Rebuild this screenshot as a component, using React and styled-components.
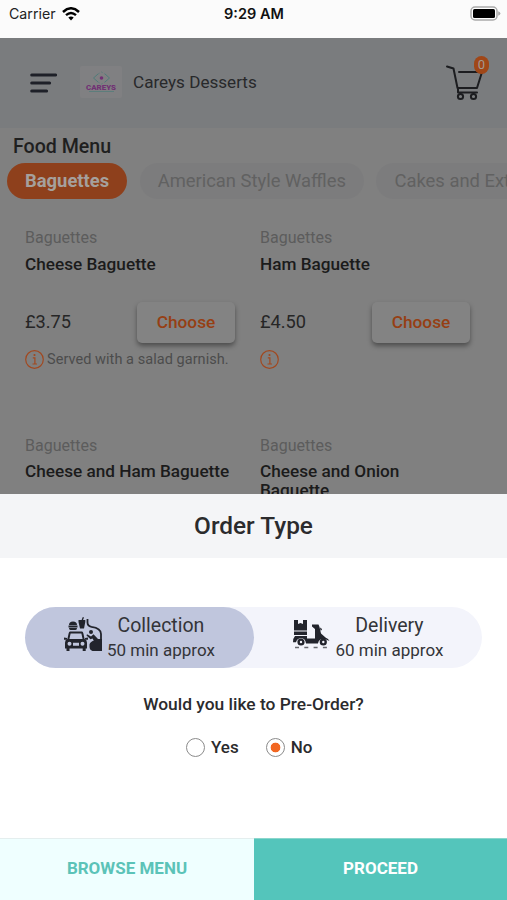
import React, { useState } from "react";
import styled, { createGlobalStyle, css } from "styled-components";

const GlobalStyle = createGlobalStyle`
  * {
    box-sizing: border-box;
  }
  body {
    margin: 0;
    font-family: Roboto, "Liberation Sans", sans-serif;
    color: #2b2b2d;
  }
  button {
    font-family: inherit;
    border: none;
    padding: 0;
    cursor: pointer;
  }
`;

const Screen = styled.div`
  display: flex;
  flex-direction: column;
  width: 507px;
  height: 900px;
  overflow: hidden;
  background: #fff;
`;

const StatusBar = styled.div`
  display: grid;
  grid-template-columns: 1fr auto 1fr;
  align-items: center;
  flex: 0 0 38px;
  padding: 0 6px 11px 9px;
  background: #fbfbfb;
  color: #111;
  font-family: Inter, Roboto, sans-serif;
`;

const Carrier = styled.span`
  display: flex;
  align-items: center;
  gap: 6px;
  font-size: 14.2px;
  color: #222;
`;

const Clock = styled.span`
  margin-right: 2px;
  font-size: 14.5px;
  font-weight: 600;
`;

const BatteryIcon = styled.svg`
  justify-self: end;
`;

const Page = styled.div`
  flex: 0 0 456px;
  overflow: hidden;
  background: #808080;
`;

const Header = styled.header`
  display: flex;
  align-items: center;
  height: 90px;
  padding: 0 17px 0 30px;
  background: #7a7c7e;
`;

const Logo = styled.svg`
  margin: 0 11px 2px 23px;
  border-radius: 2px;
  background: #808082;
`;

const ShopName = styled.span`
  flex: 1;
  padding-bottom: 2px;
  font-size: 17.1px;
  color: #28292b;
`;

const Cart = styled.div`
  position: relative;
  width: 46px;
  height: 54px;
`;

const Badge = styled.span`
  position: absolute;
  top: 0;
  right: 1px;
  width: 15px;
  height: 18px;
  border-radius: 8px;
  background: #a04718;
  color: #a39a94;
  font-size: 13px;
  line-height: 17px;
  text-align: center;
`;

const MenuTitle = styled.h2`
  height: 35px;
  margin: 0;
  padding-left: 13px;
  font-size: 19.6px;
  font-weight: 500;
  line-height: 37px;
  color: #1f1f1f;
`;

const Tabs = styled.div`
  display: flex;
  gap: 12.5px;
  padding-left: 7px;
`;

const Tab = styled.button`
  flex: none;
  height: 36px;
  padding: 0 18px 2px;
  border-radius: 18px;
  font-size: 18.4px;
  white-space: nowrap;
  background: #7c7c7d;
  color: #616161;
  ${({ $active }) =>
    $active &&
    css`
      background: #8e401c;
      color: #a5a09d;
      font-weight: 700;
    `}
`;

const Products = styled.div`
  display: grid;
  grid-template-columns: 210px 210px;
  column-gap: 25px;
  grid-auto-rows: 207.5px;
  padding: 28px 0 0 25px;
`;

const Category = styled.div`
  font-size: 16px;
  line-height: 22px;
  color: #5c5c5c;
`;

const ProductName = styled.div`
  width: 208px;
  height: 47.5px;
  margin-top: 5.5px;
  font-size: 17.2px;
  font-weight: 500;
  line-height: 19px;
  color: #1b1b1b;
`;

const PriceRow = styled.div`
  display: flex;
  justify-content: space-between;
  height: 41px;
  color: #262626;
  font-size: 18.2px;
  line-height: 39px;
`;

const ChooseButton = styled.button`
  width: 98px;
  height: 41px;
  padding-bottom: 2px;
  border-radius: 5px;
  background: #838383;
  color: #963f14;
  font-size: 17.3px;
  font-weight: 500;
  box-shadow: 0 3px 5px rgba(0, 0, 0, 0.4);
`;

const Note = styled.div`
  display: flex;
  align-items: center;
  gap: 3px;
  height: 20px;
  margin-top: 6px;
  font-size: 14.5px;
  letter-spacing: 0.05px;
  white-space: nowrap;
  color: #4c4c4c;
`;

const Sheet = styled.section`
  display: flex;
  flex-direction: column;
  flex: 1;
  background: #fff;
`;

const SheetTitle = styled.h1`
  margin: 0 0 49px;
  background: #f4f5f7;
  font-size: 24.4px;
  font-weight: 500;
  line-height: 64px;
  text-align: center;
`;

const OrderTypes = styled.div`
  display: flex;
  width: 457px;
  margin-left: 25px;
  border-radius: 31px;
  background: #f3f4fb;
`;

const OrderType = styled.button`
  display: flex;
  align-items: center;
  flex: 1;
  height: 61px;
  padding: 0 0 0 38px;
  gap: 5px;
  border-radius: 31px;
  background: ${({ $active }) => ($active ? "#c0c6dd" : "transparent")};
  color: #333438;
  svg {
    margin-bottom: 5px;
  }
`;

const OrderLabel = styled.span`
  display: flex;
  flex-direction: column;
  align-items: center;
  padding-bottom: 1px;
  font-size: 19.5px;
  line-height: 26px;
  small {
    font-size: 17px;
    line-height: 23px;
  }
`;

const Question = styled.p`
  margin: 24px 0 0;
  font-size: 17.4px;
  font-weight: 500;
  line-height: 24px;
  text-align: center;
`;

const Choices = styled.div`
  display: flex;
  gap: 27px;
  margin: 19px 0 0 186px;
`;

const Choice = styled.label`
  display: flex;
  align-items: center;
  gap: 6px;
  height: 23px;
  font-size: 17px;
  font-weight: 500;
  input {
    appearance: none;
    width: 19px;
    height: 19px;
    margin: 2px 0 0;
    border: 1px solid #8b8b8b;
    border-radius: 50%;
  }
  input:checked {
    background: radial-gradient(circle, #f26722 4.5px, transparent 5.2px);
  }
`;

const Footer = styled.footer`
  display: flex;
  height: 62px;
  margin-top: auto;
`;

const FooterButton = styled.button`
  width: ${({ $primary }) => ($primary ? "253px" : "254px")};
  padding-bottom: 3px;
  border-top: 1px solid ${({ $primary }) => ($primary ? "#8bd6cc" : "#e4eeee")};
  background: ${({ $primary }) => ($primary ? "#54c5bb" : "#efffff")};
  color: ${({ $primary }) => ($primary ? "#fff" : "#5bc3b8")};
  font-size: 17px;
  font-weight: 700;
`;

const WifiIcon = () => (
  <svg width="18" height="14" viewBox="0 0 18 14" fill="none" stroke="#000">
    <path d="M1 5Q9 -2.4 17 5" strokeWidth="2.5" />
    <path d="M4 8.2Q9 3.8 14 8.2" strokeWidth="2.4" />
    <path d="M6.3 10.6Q9 8.3 11.7 10.6L9 13.6Z" fill="#000" stroke="none" />
  </svg>
);

const Battery = () => (
  <BatteryIcon width="31" height="15" viewBox="0 0 31 15">
    <rect x="1" y="1" width="26" height="13" rx="4" fill="#fff" stroke="#aaa" strokeWidth="1.5" />
    <rect x="3" y="3" width="22" height="9" rx="1.5" fill="#000" />
    <path d="M28.2 5.2Q30.4 6 30.4 7.5T28.2 9.8Z" fill="#aaa" />
  </BatteryIcon>
);

const MenuIcon = () => (
  <svg width="27" height="20" viewBox="0 0 27 20" stroke="#1e2028" strokeWidth="3" strokeLinecap="round">
    <path d="M1.7 2H25.6M1.7 10H19.6M1.7 18H16.6" />
  </svg>
);

const ShopLogo = () => (
  <Logo width="42" height="32" viewBox="0 0 42 32">
    <g fill="none" stroke="#4f7c79" strokeWidth="1">
      <path d="M18 8L13.5 12L18 16M25 8L29.5 12L25 16" />
      <path d="M18 8L21.5 6L25 8M18 16L21.5 18L25 16" strokeDasharray="2 1.5" opacity=".6" />
      <path d="M9 25.5H34" opacity=".7" />
    </g>
    <circle cx="21.5" cy="12" r="1.8" fill="#713274" />
    <text x="6" y="24" textLength="30" lengthAdjust="spacingAndGlyphs" fontSize="6.8" fontWeight="900" fill="#713274">
      CAREYS
    </text>
  </Logo>
);

const CartIcon = () => (
  <svg width="46" height="50" viewBox="0 0 46 50" fill="none" stroke="#1c1d20" strokeWidth="2" strokeLinecap="round" strokeLinejoin="round">
    <path d="M3 10.5L9.5 12.5L13.5 32H33L38 16H15" />
    <path d="M14 32V36.5H33" />
    <circle cx="16.5" cy="40.5" r="2.6" />
    <circle cx="29.5" cy="40.5" r="2.6" />
  </svg>
);

const InfoIcon = () => (
  <svg width="19" height="19" viewBox="0 0 19 19" fill="none" stroke="#a1481f" strokeWidth="1.2">
    <circle cx="9.5" cy="9.5" r="8.8" />
    <path d="M7.8 7.8H9.9V14M7.5 14H12" />
    <circle cx="9.5" cy="5" r="1.1" fill="#a1481f" stroke="none" />
  </svg>
);

const CollectionIcon = () => (
  <svg width="39" height="36" viewBox="-1 0 39 36" fill="#22242c">
    <path d="M5 8Q5 4.5 9 4.5Q13 4.5 13 8ZM4.5 8.6H13.5V10.4H4.5ZM5 11H13Q13 13 11.5 13H6.5Q5 13 5 11Z" />
    <path d="M14.5 3H17.6L18.8 0L20 .4L19 3H21.3V5L20 11.5H16L14.5 5Z" />
    <path
      fillRule="evenodd"
      d="M6 14.5H18Q19 14.5 19.4 16.5L20.6 22Q23 22.7 23 25.7V31.5H21.7V34H18.7V31.5H5.5V34H2.5V31.5H1V25.7Q1 22.7 3.4 22L4.6 16.5Q5 14.5 6 14.5ZM6.6 16.5L5.4 22H18.6L17.4 16.5ZM5.5 24.7A2 2 0 1 0 5.5 28.7A2 2 0 1 0 5.5 24.7ZM18.5 24.7A2 2 0 1 0 18.5 28.7A2 2 0 1 0 18.5 24.7ZM9 25.7H15V28.7H9Z"
    />
    <path d="M0 20.5L3 21V22.7H0ZM24 20.5L21 21V22.7H24Z" />
    <path d="M23.5 2V5.5Q23.5 9 27.5 9.8Q37 11 37 17V27" fill="none" stroke="#22242c" strokeWidth="1.8" />
    <circle cx="27" cy="15" r="2" />
    <path d="M23 17.3L27 19.4L29.5 17.3L34 22L33 24H30L28.5 21.6L26.5 22.3L22.5 18.6Z" />
    <path d="M25.5 27.5Q26 25 30 23.5L33 22H38V34H28.5Q25.5 33 25.5 29.5Z" />
  </svg>
);

const DeliveryIcon = () => (
  <svg width="39" height="36" viewBox="-1 -3 39 36" fill="#22242c">
    <path d="M1 0H5V4L7.5 3L10 4V0H14V10.5H1Z" />
    <path d="M1 11.5H14V15H1Z" />
    <path d="M2 16H14V18.5H22V9L19 6.5V4.5H25.5L26.5 7L28 13.5L32.5 17.5Q35.5 18.5 36.5 21L33 19.6Q26 17.5 25 23.6H13Q12.4 18.3 8 18.3Q4 18.3 3 22.3H0Q0 18 2 16Z" />
    <path d="M27 7.5Q29 8 29 10L27.5 10.5Z" />
    <g fill="none" stroke="#22242c" strokeWidth="2.4">
      <circle cx="8" cy="22" r="2.4" />
      <circle cx="30.3" cy="22" r="2.4" />
    </g>
    <path d="M2 27.5H35" stroke="#66676d" strokeWidth="1.4" strokeDasharray="4 5.3" />
  </svg>
);

const categories = ["Baguettes", "American Style Waffles", "Cakes and Extras"];

const products = [
  { name: "Cheese Baguette", price: "£3.75", note: "Served with a salad garnish." },
  { name: "Ham Baguette", price: "£4.50" },
  { name: "Cheese and Ham Baguette", price: "£4.50" },
  { name: "Cheese and Onion Baguette", price: "£4.50" },
];

const orderTypes = [
  { name: "Collection", time: "50 min approx", Icon: CollectionIcon },
  { name: "Delivery", time: "60 min approx", Icon: DeliveryIcon },
];

const Product = ({ name, price, note }) => (
  <div>
    <Category>Baguettes</Category>
    <ProductName>{name}</ProductName>
    <PriceRow>
      {price}
      <ChooseButton>Choose</ChooseButton>
    </PriceRow>
    <Note>
      <InfoIcon />
      {note}
    </Note>
  </div>
);

const App = () => {
  const [category, setCategory] = useState("Baguettes");
  const [orderType, setOrderType] = useState("Collection");
  const [preOrder, setPreOrder] = useState("No");

  return (
    <Screen>
      <GlobalStyle />
      <StatusBar>
        <Carrier>
          Carrier <WifiIcon />
        </Carrier>
        <Clock>9:29 AM</Clock>
        <Battery />
      </StatusBar>
      <Page>
        <Header>
          <MenuIcon />
          <ShopLogo />
          <ShopName>Careys Desserts</ShopName>
          <Cart>
            <CartIcon />
            <Badge>0</Badge>
          </Cart>
        </Header>
        <MenuTitle>Food Menu</MenuTitle>
        <Tabs>
          {categories.map((item) => (
            <Tab
              key={item}
              $active={item === category}
              onClick={() => setCategory(item)}
            >
              {item}
            </Tab>
          ))}
        </Tabs>
        <Products>
          {products.map((product) => (
            <Product key={product.name} {...product} />
          ))}
        </Products>
      </Page>
      <Sheet>
        <SheetTitle>Order Type</SheetTitle>
        <OrderTypes>
          {orderTypes.map(({ name, time, Icon }) => (
            <OrderType
              key={name}
              $active={name === orderType}
              onClick={() => setOrderType(name)}
            >
              <Icon />
              <OrderLabel>
                {name}
                <small>{time}</small>
              </OrderLabel>
            </OrderType>
          ))}
        </OrderTypes>
        <Question>Would you like to Pre-Order?</Question>
        <Choices>
          {["Yes", "No"].map((answer) => (
            <Choice key={answer}>
              <input
                type="radio"
                name="preorder"
                checked={preOrder === answer}
                onChange={() => setPreOrder(answer)}
              />
              {answer}
            </Choice>
          ))}
        </Choices>
        <Footer>
          <FooterButton>BROWSE MENU</FooterButton>
          <FooterButton $primary>PROCEED</FooterButton>
        </Footer>
      </Sheet>
    </Screen>
  );
};

export default App;
